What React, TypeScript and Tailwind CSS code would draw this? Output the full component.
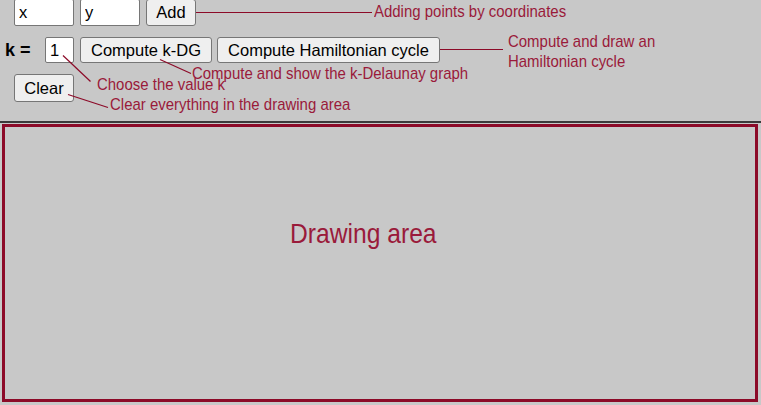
import React from "react";

const F = { fontFamily: '"Liberation Sans", Arial, sans-serif' };

function Note({ className, children }: { className: string; children: React.ReactNode }) {
  return (
    <div
      className={`absolute whitespace-nowrap text-[17px] leading-[17px] text-[#9a1a3a] origin-top-left scale-x-[0.88] ${className}`}
    >
      {children}
    </div>
  );
}

export default function App() {
  return (
    <div className="relative w-[761px] h-[405px] overflow-hidden bg-[#c8c8c8] text-black" style={F}>
      <div className="flex flex-col h-[123px] border-b-2 border-[#3a3a3a] box-border">
        <div className="flex items-center gap-[6px] pl-[14px] -mt-px h-[27px]">
          <input
            defaultValue="x"
            className="w-[60px] h-[27px] bg-white border border-[#767676] rounded-[2px] px-[4px] text-[16.5px] outline-none"
          />
          <input
            defaultValue="y"
            className="w-[60px] h-[27px] bg-white border border-[#767676] rounded-[2px] px-[4px] text-[16.5px] outline-none"
          />
          <button className="w-[50px] h-[27px] bg-[#efefef] border border-[#767676] rounded-[3px] text-[16.5px] leading-none">
            Add
          </button>
        </div>
        <div className="flex items-center mt-[11px] h-[26px]">
          <span className="ml-[5px] w-[40px] font-bold text-[18px] leading-none">k =</span>
          <input
            defaultValue="1"
            className="w-[29px] h-[26px] bg-white border border-[#767676] rounded-[2px] px-[4px] text-[16.5px] outline-none"
          />
          <button className="ml-[6px] w-[132px] h-[26px] bg-[#efefef] border border-[#767676] rounded-[3px] text-[16.5px] leading-none">
            Compute k-DG
          </button>
          <button className="ml-[5px] w-[223px] h-[26px] bg-[#efefef] border border-[#767676] rounded-[3px] text-[16.5px] leading-none">
            Compute Hamiltonian cycle
          </button>
        </div>
        <div className="flex items-center mt-[11px] pl-[14px] h-[28px]">
          <button className="w-[60px] h-[28px] bg-[#efefef] border border-[#767676] rounded-[3px] text-[16.5px] leading-none">
            Clear
          </button>
        </div>
      </div>
      <div className="ml-[2px] mt-px w-[756px] h-[278px] border-[3px] border-[#8c0a28] box-border" />

      <svg className="absolute inset-0 pointer-events-none" width="761" height="405">
        <g stroke="#8c0a28" strokeWidth="1.2" fill="none">
          <line x1="196" y1="12.5" x2="372" y2="12.5" />
          <line x1="440" y1="49.5" x2="503" y2="49.5" />
          <line x1="160" y1="59.5" x2="191" y2="73.5" />
          <line x1="63" y1="55.5" x2="90.5" y2="81.5" />
          <line x1="68" y1="94.5" x2="108" y2="107.5" />
        </g>
      </svg>

      <Note className="left-[374px] top-[3px]">Adding points by coordinates</Note>
      <Note className="left-[508px] top-[32px] leading-[20px]">
        Compute and draw an
        <br />
        Hamiltonian cycle
      </Note>
      <Note className="left-[192px] top-[65px]">Compute and show the k-Delaunay graph</Note>
      <Note className="left-[97px] top-[76px]">Choose the value k</Note>
      <Note className="left-[110px] top-[96px]">Clear everything in the drawing area</Note>
      <div className="absolute left-[290px] top-[220px] whitespace-nowrap text-[28px] leading-[28px] text-[#9a1a3a] origin-top-left scale-x-[0.88]">
        Drawing area
      </div>
    </div>
  );
}
